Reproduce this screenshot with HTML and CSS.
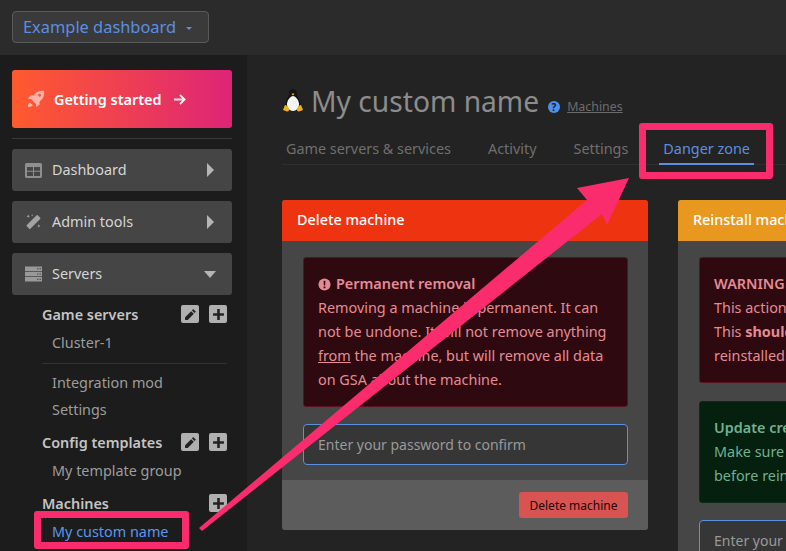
FILE: index.html
```html
<!DOCTYPE html>
<html lang="en">

<head>
    <meta charset="UTF-8" />
    <meta name="viewport" content="width=device-width, initial-scale=1.0" />
    <title>Machine - Danger zone</title>
    <link rel="stylesheet" href="styles.css">
</head>

<body>
    <header class="topbar">
        <button class="dash-select"><span class="dash-name">Example dashboard</span> <span class="caret"></span></button>
    </header>

    <div class="layout">
        <aside class="sidebar">
            <a class="start-btn">
                <svg class="rocket" viewBox="0 0 20 20"><path fill="#ffb3a8" d="M19 1c-5-.6-9 1-11.500 5H4L1 9.500l3.500.6L9.900 15.500l.6 3.500 3.500-3v-3.500C18 10 19.600 6 19 1zM14 7.500a1.600 1.600 0 1 1 0-3.200 1.600 1.600 0 0 1 0 3.200zM3 13.500c-1.500 1-2 3.500-2 5.500 2 0 4.500-.5 5.500-2z"/></svg>
                <span>Getting started</span>
                <svg class="arrow-right" viewBox="0 0 14 14"><path fill="none" stroke="#ffe6e6" stroke-width="2" d="M1 7h11M7.500 2l5 5-5 5"/></svg>
            </a>
            <hr class="side-line">

            <a class="nav-item">
                <svg class="nav-icon" viewBox="0 0 17 16"><path fill="#8f8f8f" fill-rule="evenodd" d="M1.500 1h14A1.500 1.500 0 0 1 17 2.500v12a1.500 1.500 0 0 1-1.500 1.500h-14A1.500 1.500 0 0 1 0 14.500v-12A1.500 1.500 0 0 1 1.500 1zM2 5v3.800h6V5zM9 5v3.800h6V5zM2 9.800V14h6V9.800zM9 9.800V14h6V9.800z"/></svg>
                <span class="nav-label">Dashboard</span>
                <span class="tri-right"></span>
            </a>
            <a class="nav-item">
                <svg class="nav-icon" viewBox="0 0 18 18"><path fill="#a3a3a3" d="M12.500 1.500a1 1 0 0 1 1.400 0l2.600 2.600a1 1 0 0 1 0 1.400L5.500 16.500a1 1 0 0 1-1.400 0l-2.600-2.600a1 1 0 0 1 0-1.400zM3 .5l.6 1.400L5 2.500l-1.400.6L3 4.500l-.6-1.400L1 2.500l1.400-.6zM7.500 0l.4 1 1 .4-1 .4-.4 1-.4-1-1-.4 1-.4zM15 11.500l.6 1.400 1.400.6-1.400.6-.6 1.400-.6-1.400-1.400-.6 1.400-.6z"/></svg>
                <span class="nav-label">Admin tools</span>
                <span class="tri-right"></span>
            </a>
            <a class="nav-item">
                <svg class="nav-icon" viewBox="0 0 17 16"><path fill="#999" fill-rule="evenodd" d="M0 .5h17v4.500H0zM12 2.200v1h1.500v-1zM14.500 2.200v1H16v-1zM0 5.800h17v4.400H0zM12 7.500v1h1.500v-1zM14.500 7.500v1H16v-1zM0 11h17v4.500H0zM12 12.700v1h1.500v-1zM14.500 12.700v1H16v-1z"/></svg>
                <span class="nav-label">Servers</span>
                <span class="tri-down"></span>
            </a>

            <div class="sub-head sub-first">
                <span>Game servers</span>
                <span class="tool-btn"><svg viewBox="0 0 12 12"><path fill="#222" d="M8.500 1l2.500 2.500-1.200 1.200-2.500-2.500zM6.600 2.900l2.500 2.500L3.500 11H1V8.500z"/></svg></span>
                <span class="tool-btn"><svg viewBox="0 0 12 12"><path fill="#222" d="M4.800 1h2.400v3.800H11v2.400H7.200V11H4.800V7.200H1V4.800h3.800z"/></svg></span>
            </div>
            <a class="sub-link">Cluster-1</a>
            <hr class="sub-line">
            <a class="sub-link">Integration mod</a>
            <a class="sub-link">Settings</a>

            <div class="sub-head">
                <span>Config templates</span>
                <span class="tool-btn"><svg viewBox="0 0 12 12"><path fill="#222" d="M8.500 1l2.500 2.500-1.200 1.200-2.500-2.500zM6.600 2.900l2.500 2.500L3.500 11H1V8.500z"/></svg></span>
                <span class="tool-btn"><svg viewBox="0 0 12 12"><path fill="#222" d="M4.800 1h2.400v3.800H11v2.400H7.200V11H4.800V7.200H1V4.800h3.800z"/></svg></span>
            </div>
            <a class="sub-link">My template group</a>

            <div class="sub-head">
                <span>Machines</span>
                <span class="tool-btn"><svg viewBox="0 0 12 12"><path fill="#222" d="M4.800 1h2.400v3.800H11v2.400H7.200V11H4.800V7.200H1V4.800h3.800z"/></svg></span>
            </div>
            <a class="sub-link sub-active">My custom name</a>
        </aside>

        <main class="content">
            <div class="title-row">
                <svg class="penguin" viewBox="0 0 20 24">
                    <path fill="#141414" d="M10 0C7 0 6 2.500 6 5c0 2-1 3-2.500 6C2.500 13 2 16 3 19h14c1-3 .5-6-.5-8C15 8 14 7 14 5c0-2.500-1-5-4-5z"/>
                    <path fill="#f4f4f4" d="M10 7C7.500 7 4.500 11 4 14.500 3.700 18 6 22 10 22s6.300-4 6-7.500C15.500 11 12.500 7 10 7z"/>
                    <path fill="#f2b01e" d="M8.500 5l1.500-.8 1.500.8-1.500 1.500zM0 21l2-5c1.500 0 3 1.500 4 4 .5 1.500-1 3-2 2.500zM20 21l-2-5c-1.500 0-3 1.500-4 4-.5 1.500 1 3 2 2.500z"/>
                </svg>
                <h1>My custom name</h1>
                <svg class="help" viewBox="0 0 12 12"><circle cx="6" cy="6" r="6" fill="#4d8fee"/><text x="6" y="9.500" text-anchor="middle" class="help-mark">?</text></svg>
                <a class="crumb">Machines</a>
            </div>

            <nav class="tabs">
                <a class="tab">Game servers &amp; services</a>
                <a class="tab">Activity</a>
                <a class="tab">Settings</a>
                <a class="tab tab-active">Danger zone</a>
            </nav>

            <div class="cards">
                <section class="card">
                    <div class="card-head head-red">Delete machine</div>
                    <div class="card-body">
                        <div class="alert alert-red">
                            <div class="alert-title">
                                <svg class="alert-icon" viewBox="0 0 14 14"><circle cx="7" cy="7" r="6.500" fill="#e58a95"/><path fill="#2e0a10" d="M6 3h2l-.3 5H6.300zM6 9.200h2v1.900H6z"/></svg>
                                Permanent removal
                            </div>
                            Removing a machine is permanent. It can not be undone. It will not remove anything <u>from</u> the machine, but will remove all data on GSA about the machine.
                        </div>
                        <input class="pass-input" type="text" placeholder="Enter your password to confirm">
                    </div>
                    <div class="card-foot">
                        <button class="btn-danger">Delete machine</button>
                    </div>
                </section>

                <section class="card">
                    <div class="card-head head-orange">Reinstall machine</div>
                    <div class="card-body">
                        <div class="alert alert-red">
                            <div class="alert-title">WARNING</div>
                            This action will wipe the machine.<br>
                            This <b>should</b> only be done when<br>
                            reinstalled.
                        </div>
                        <div class="alert alert-green">
                            <div class="alert-title">Update credentials</div>
                            Make sure credentials are saved<br>
                            before reinstalling.
                        </div>
                        <input class="pass-input" type="text" placeholder="Enter your password to confirm">
                    </div>
                </section>
            </div>
        </main>
    </div>

    <!-- annotations drawn on top of the screenshot -->
    <div class="mark mark-tab"></div>
    <div class="mark mark-link"></div>
    <svg class="big-arrow" viewBox="0 0 786 551" width="786" height="551">
        <polygon fill="#fb2c6e" points="629,178 607,225 602,214 202,531 199,528 587,200 577,188" />
    </svg>
</body>

</html>
```

FILE: styles.css
```css
body {
    margin: 0;
    width: 786px;
    height: 551px;
    overflow: hidden;
    position: relative;
    background-color: #232323;
    font-family: "Noto Sans", "Open Sans", sans-serif;
    font-size: 14.4px;
    color: #ccc;
}

.topbar {
    height: 55px;
    box-sizing: border-box;
    padding: 11px 12px;
    background: #2b2b2b;
}

.dash-select {
    width: 197px;
    height: 32px;
    padding: 0 10px 2px;
    text-align: left;
    font-family: inherit;
    font-size: 16.4px;
    color: #5b8fe0;
    background: #3a3a3a;
    border: 1px solid #5a5a5a;
    border-radius: 4px;
}

.caret {
    display: inline-block;
    margin-left: 6px;
    vertical-align: middle;
    border-left: 3px solid transparent;
    border-right: 3px solid transparent;
    border-top: 3px solid #5b8fe0;
}

.layout {
    display: flex;
    height: 496px;
}

.sidebar {
    flex: none;
    width: 247px;
    box-sizing: border-box;
    padding: 15px 15px 0 12px;
    background: #1c1c1c;
}

.start-btn {
    display: flex;
    align-items: center;
    height: 58px;
    padding-left: 15px;
    font-weight: 600;
    color: #fff;
    border-radius: 3px;
    background: linear-gradient(90deg, #ff5a2e, #de2477);
}

.rocket {
    width: 18px;
    height: 18px;
    margin-right: 9px;
}

.arrow-right {
    width: 13px;
    height: 13px;
    margin-left: 12px;
}

.side-line {
    margin: 10px 0;
    border: 0;
    border-top: 1px solid #3a3a3a;
}

.nav-item {
    display: flex;
    align-items: center;
    height: 42px;
    margin-bottom: 10px;
    padding: 0 16px 0 13px;
    line-height: 18px;
    background: #454545;
    border-radius: 3px;
    color: #d6d6d6;
}

.nav-icon {
    width: 17px;
    height: 16px;
    margin-right: 10px;
}

.nav-label {
    flex: 1;
}

.tri-right {
    margin-right: 2px;
    border-top: 7px solid transparent;
    border-bottom: 7px solid transparent;
    border-left: 7px solid #b5b5b5;
}

.tri-down {
    border-left: 6px solid transparent;
    border-right: 6px solid transparent;
    border-top: 7px solid #b5b5b5;
}

.sub-head {
    display: flex;
    align-items: center;
    gap: 10px;
    height: 18px;
    margin-top: 12px;
    padding: 0 5px 0 30px;
    font-weight: 600;
    color: #c4c4c4;
}

.sub-head span:first-child {
    flex: 1;
}

.sub-first {
    margin-top: 1px;
}

.tool-btn {
    display: flex;
    align-items: center;
    justify-content: center;
    width: 18px;
    height: 18px;
    background: #b0b0b0;
    border-radius: 2px;
}

.tool-btn svg {
    width: 13px;
    height: 13px;
}

.sub-link {
    display: block;
    margin: 5px 0 0 40px;
    height: 22px;
    line-height: 22px;
    color: #9c9c9c;
}

.sub-head + .sub-link {
    margin-top: 9px;
}

.sub-line {
    margin: 9px 5px 8px 30px;
    border: 0;
    border-top: 1px solid #333;
}

.sub-line + .sub-link {
    margin-top: 0;
}

.sub-active {
    color: #5b96ee;
}

.content {
    flex: 1;
    min-width: 0;
    padding: 18px 0 0 35px;
    overflow: hidden;
}

.title-row {
    display: flex;
    align-items: center;
    height: 56px;
}

.penguin {
    width: 20px;
    height: 24px;
    margin: 0 8px 0 1px;
}

h1 {
    margin: 0;
    font-size: 28.2px;
    font-weight: 400;
    color: #8c8c8c;
}

.help {
    width: 12px;
    height: 12px;
    margin: 11px 7px 0 9px;
}

.help-mark {
    font-size: 10px;
    font-weight: 700;
    fill: #1c1c1c;
}

.crumb {
    margin-top: 10px;
    font-size: 12.4px;
    color: #6c6c6c;
    text-decoration: underline;
}

.tabs {
    display: flex;
    gap: 29px;
    height: 36px;
    box-sizing: border-box;
    padding-top: 10px;
    border-bottom: 1px solid #2f2f2f;
}

.tab {
    box-sizing: border-box;
    padding: 0 4px;
    height: 26px;
    line-height: 20px;
    color: #6f6f6f;
}

.tab-active {
    margin-left: -2px;
    color: #5b8fe0;
    border-bottom: 2px solid #5b8fe0;
}

.cards {
    display: flex;
    align-items: flex-start;
    gap: 30px;
    margin-top: 35px;
}

.card {
    flex: none;
    width: 366px;
    border-radius: 3px;
    overflow: hidden;
    background: #464646;
}

.card-head {
    height: 41px;
    line-height: 39px;
    padding-left: 15px;
    color: #fff;
    font-weight: 500;
}

.head-red {
    background: #ee3311;
}

.head-orange {
    background: #e8981f;
}

.card-body {
    padding: 16px 20px 15px 21px;
}

.alert {
    box-sizing: border-box;
    padding: 14px;
    margin-bottom: 17px;
    line-height: 24px;
    border-radius: 3px;
    border: 1px solid #5c1420;
}

.alert-red {
    background: #2e0a10;
    color: #e58a95;
}

.alert-green {
    margin-top: 18px;
    background: #06200f;
    border-color: #0b2c1a;
    color: #6fb08f;
}

.alert-title {
    display: flex;
    align-items: center;
    gap: 5px;
    font-weight: 600;
}

.alert-icon {
    width: 13px;
    height: 13px;
}

.pass-input {
    display: block;
    width: 100%;
    height: 41px;
    box-sizing: border-box;
    padding: 0 14px;
    font-family: inherit;
    font-size: 14px;
    color: #ccc;
    background: #363636;
    border: 1px solid #5b8fe0;
    border-radius: 4px;
}

.pass-input::placeholder {
    color: #999;
}

.card-foot {
    display: flex;
    justify-content: flex-end;
    padding: 12px 20px;
    background: #5c5c5c;
}

.btn-danger {
    width: 109px;
    height: 26px;
    padding: 0;
    font-family: inherit;
    font-size: 12px;
    color: #1e0406;
    background: #d85452;
    border: 0;
    border-radius: 3px;
}

.mark {
    position: absolute;
    box-sizing: border-box;
    border: 7px solid #fb2c6e;
    border-radius: 3px;
}

.mark-tab {
    left: 639px;
    top: 123px;
    width: 134px;
    height: 56px;
}

.mark-link {
    left: 34px;
    top: 511px;
    width: 155px;
    height: 38px;
}

.big-arrow {
    position: absolute;
    left: 0;
    top: 0;
}
```
